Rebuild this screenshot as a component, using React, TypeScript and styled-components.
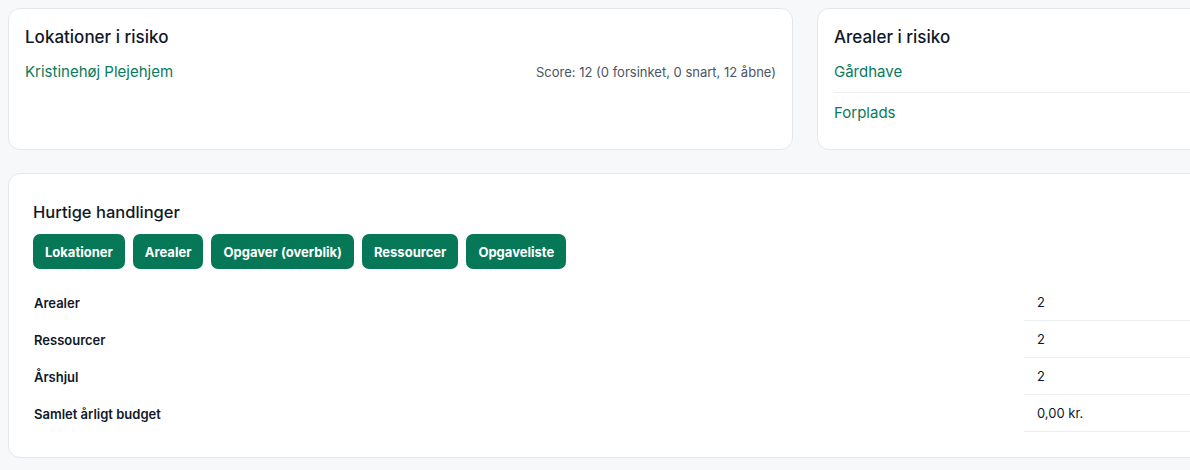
import React from "react";
import styled, { createGlobalStyle } from "styled-components";

const GlobalStyle = createGlobalStyle`
  body {
    margin: 0;
    background-color: #f7f8fa;
    font-family: Inter, "Noto Sans", sans-serif;
    color: #111827;
    overflow: hidden;
  }
`;

const riskLocations = [
  { name: "Kristinehøj Plejehjem", score: "Score: 12 (0 forsinket, 0 snart, 12 åbne)" },
];

const riskAreas = ["Gårdhave", "Forplads"];

const actions = ["Lokationer", "Arealer", "Opgaver (overblik)", "Ressourcer", "Opgaveliste"];

const stats = [
  { label: "Arealer", value: "2" },
  { label: "Ressourcer", value: "2" },
  { label: "Årshjul", value: "2" },
  { label: "Samlet årligt budget", value: "0,00 kr." },
];

export default function App() {
  return (
    <>
      <GlobalStyle />
      <Page>
        <TopGrid>
          <Card>
            <CardTitle>Lokationer i risiko</CardTitle>
            <List>
              {riskLocations.map((l) => (
                <Item key={l.name}>
                  <Link>{l.name}</Link>
                  <Score>{l.score}</Score>
                </Item>
              ))}
            </List>
          </Card>
          <Card>
            <CardTitle>Arealer i risiko</CardTitle>
            <List>
              {riskAreas.map((a) => (
                <Item key={a}>
                  <Link>{a}</Link>
                </Item>
              ))}
            </List>
          </Card>
        </TopGrid>

        <BigCard>
          <SectionTitle>Hurtige handlinger</SectionTitle>
          <Buttons>
            {actions.map((a) => (
              <ActionButton key={a}>{a}</ActionButton>
            ))}
          </Buttons>
          <Stats>
            {stats.map((s) => (
              <React.Fragment key={s.label}>
                <Label>{s.label}</Label>
                <Value>{s.value}</Value>
              </React.Fragment>
            ))}
          </Stats>
        </BigCard>
      </Page>
    </>
  );
}

const Page = styled.div`
  width: 1594px;
  padding: 8px;
  display: flex;
  flex-direction: column;
  gap: 23px;
`;

const TopGrid = styled.div`
  display: grid;
  grid-template-columns: 785px 785px;
  gap: 24px;
`;

const Card = styled.div`
  background-color: white;
  border: 1px solid #e5e7eb;
  border-radius: 12px;
  padding: 16px;
`;

const CardTitle = styled.h3`
  margin: 0 0 3px;
  font-size: 17px;
  line-height: 24px;
  font-weight: 500;
  color: #111827;
`;

const List = styled.ul`
  margin: 0;
  padding: 0;
  list-style: none;
`;

const Item = styled.li`
  display: flex;
  justify-content: space-between;
  align-items: center;
  padding: 10px 0;
  line-height: 20px;
  border-bottom: 1px solid #eceef1;

  &:last-child {
    border-bottom: none;
  }
`;

const Link = styled.a`
  font-size: 15px;
  color: #0a7a5c;
  cursor: pointer;
`;

const Score = styled.span`
  font-size: 13px;
  color: #4b5563;
`;

const BigCard = styled.div`
  background-color: white;
  border: 1px solid #e5e7eb;
  border-radius: 12px;
  padding: 24px 24px 25px;
`;

const SectionTitle = styled.h2`
  margin: 0 0 8px;
  font-size: 16.5px;
  line-height: 28px;
  font-weight: 500;
  color: #111827;
`;

const Buttons = styled.div`
  display: flex;
  gap: 8px;
  margin-bottom: 15px;
`;

const ActionButton = styled.button`
  height: 35px;
  padding: 0 12px;
  border: none;
  border-radius: 7px;
  background-color: #067857;
  color: white;
  font-family: inherit;
  font-size: 13px;
  font-weight: 700;
  cursor: pointer;
`;

const Stats = styled.div`
  display: grid;
  grid-template-columns: 991px 1fr;
`;

const Label = styled.div`
  height: 37px;
  display: flex;
  align-items: center;
  padding-left: 1px;
  font-size: 13px;
  font-weight: 600;
  color: #111827;
`;

const Value = styled.div`
  height: 37px;
  display: flex;
  align-items: center;
  padding-left: 13px;
  border-bottom: 1px solid #eceef1;
  font-size: 13px;
  color: #111827;
  box-sizing: border-box;
`;
